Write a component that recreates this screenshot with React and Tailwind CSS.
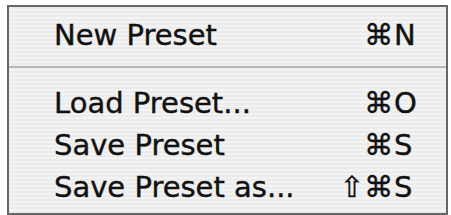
import React from "react";

const Row = ({ label, mod, k }) => (
  <div className="flex items-center h-[42px] leading-[42px]">
    <span className="flex-1 pl-[45px]">{label}</span>
    <span className="text-right">{mod}</span>
    <span className="w-[53px] pl-[1px]">{k}</span>
  </div>
);

export default function App() {
  return (
    <div className="w-[451px] h-[215px] bg-white pt-[5px] pl-[7px]">
      <div
        className="w-[441px] h-[210px] border-2 border-[#666666] bg-[repeating-linear-gradient(180deg,#ebebeb_0px,#ebebeb_2px,#f3f3f3_2px,#f3f3f3_4px)] pt-[7px] text-[29px] text-[#111111] [-webkit-text-stroke:0.4px_#111111]"
        style={{ fontFamily: '"DejaVu Sans", "Noto Sans", sans-serif' }}
      >
        <Row label="New Preset" mod="⌘" k="N" />
        <div className="mt-[10px] mb-[14px] h-[2px] bg-[#b8b8b8]" />
        <Row label="Load Preset..." mod="⌘" k="O" />
        <Row label="Save Preset" mod="⌘" k="S" />
        <Row label="Save Preset as..." mod="⇧⌘" k="S" />
      </div>
    </div>
  );
}
